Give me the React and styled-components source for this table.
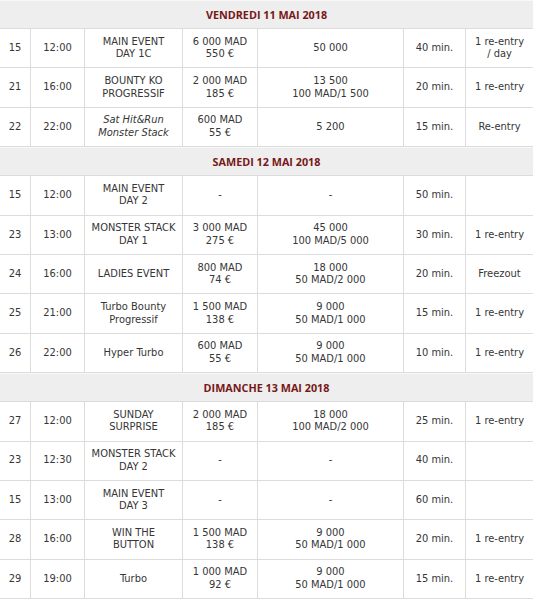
import styled, { createGlobalStyle } from "styled-components";

const GlobalStyle = createGlobalStyle`
  html, body {
    margin: 0;
    padding: 0;
    background: #ffffff;
  }
`;

const Schedule = styled.div`
  width: 533px;
  font-family: "DejaVu Sans Condensed", "DejaVu Sans", sans-serif;
  font-size: 11px;
  color: #363636;
`;

const DayHeader = styled.div`
  height: 29px;
  box-sizing: border-box;
  display: flex;
  align-items: center;
  justify-content: center;
  background-color: #eeeeee;
  border-top: 1px solid #f8f8f8;
  border-bottom: 1px solid #dcdcdc;
  font-family: "Open Sans", "DejaVu Sans", sans-serif;
  font-weight: 700;
  font-size: 10.8px;
  color: #761818;
`;

const Row = styled.div`
  display: grid;
  grid-template-columns: 31px 54px 98px 75px 146px 62px 67px;
  height: 39.4px;
  box-sizing: border-box;
  border-bottom: 1px solid #dcdcdc;
  background-color: #ffffff;
`;

const Cell = styled.div`
  display: flex;
  align-items: center;
  justify-content: center;
  text-align: center;
  line-height: 12.5px;
  border-right: ${({ last }) => (last ? "none" : "1px solid #dcdcdc")};
  font-style: ${({ italic }) => (italic ? "italic" : "normal")};
`;

const days = [
  {
    title: "VENDREDI 11 MAI 2018",
    events: [
      ["15", "12:00", "MAIN EVENT\nDAY 1C", "6 000 MAD\n550 €", "50 000", "40 min.", "1 re-entry\n/ day"],
      ["21", "16:00", "BOUNTY KO\nPROGRESSIF", "2 000 MAD\n185 €", "13 500\n100 MAD/1 500", "20 min.", "1 re-entry"],
      ["22", "22:00", "Sat Hit&Run\nMonster Stack", "600 MAD\n55 €", "5 200", "15 min.", "Re-entry", true],
    ],
  },
  {
    title: "SAMEDI 12 MAI 2018",
    events: [
      ["15", "12:00", "MAIN EVENT\nDAY 2", "-", "-", "50 min.", ""],
      ["23", "13:00", "MONSTER STACK\nDAY 1", "3 000 MAD\n275 €", "45 000\n100 MAD/5 000", "30 min.", "1 re-entry"],
      ["24", "16:00", "LADIES EVENT", "800 MAD\n74 €", "18 000\n50 MAD/2 000", "20 min.", "Freezout"],
      ["25", "21:00", "Turbo Bounty\nProgressif", "1 500 MAD\n138 €", "9 000\n50 MAD/1 000", "15 min.", "1 re-entry"],
      ["26", "22:00", "Hyper Turbo", "600 MAD\n55 €", "9 000\n50 MAD/1 000", "10 min.", "1 re-entry"],
    ],
  },
  {
    title: "DIMANCHE 13 MAI 2018",
    events: [
      ["27", "12:00", "SUNDAY\nSURPRISE", "2 000 MAD\n185 €", "18 000\n100 MAD/2 000", "25 min.", "1 re-entry"],
      ["23", "12:30", "MONSTER STACK\nDAY 2", "-", "-", "40 min.", ""],
      ["15", "13:00", "MAIN EVENT\nDAY 3", "-", "-", "60 min.", ""],
      ["28", "16:00", "WIN THE\nBUTTON", "1 500 MAD\n138 €", "9 000\n50 MAD/1 000", "20 min.", "1 re-entry"],
      ["29", "19:00", "Turbo", "1 000 MAD\n92 €", "9 000\n50 MAD/1 000", "15 min.", "1 re-entry"],
    ],
  },
];

// Renders "a\nb" as two lines
function Lines({ text }) {
  const parts = text.split("\n");
  return parts.map((p, i) => (
    <span key={i}>
      {p}
      {i < parts.length - 1 && <br />}
    </span>
  ));
}

export default function App() {
  return (
    <>
      <GlobalStyle />
      <Schedule>
        {days.map((day) => (
          <div key={day.title}>
            <DayHeader>{day.title}</DayHeader>
            {day.events.map((ev, i) => {
              const italic = ev[7] === true;
              return (
                <Row key={i}>
                  {ev.slice(0, 7).map((value, j) => (
                    <Cell key={j} last={j === 6} italic={italic && j === 2}>
                      <div>
                        <Lines text={value} />
                      </div>
                    </Cell>
                  ))}
                </Row>
              );
            })}
          </div>
        ))}
      </Schedule>
    </>
  );
}
